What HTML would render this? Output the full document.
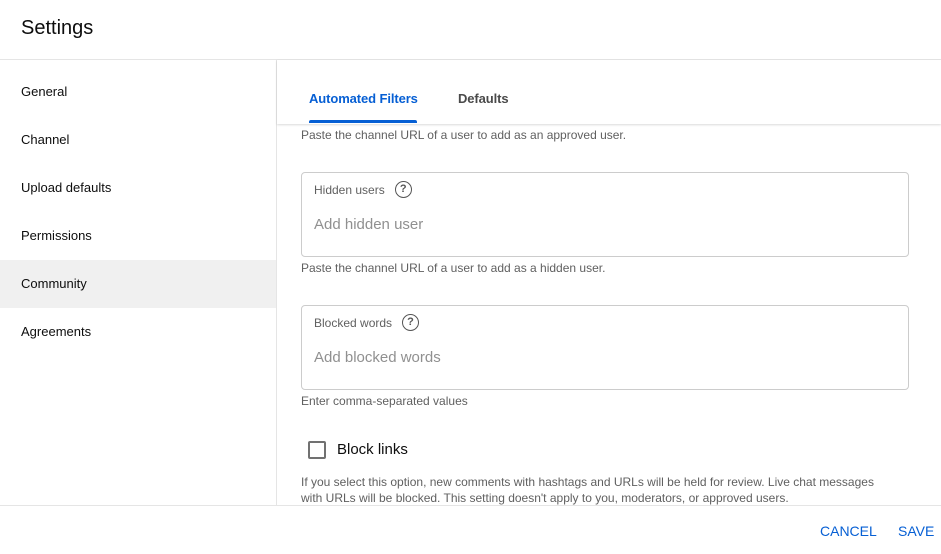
<!DOCTYPE html>
<html><head><style>
*{margin:0;padding:0;box-sizing:border-box}
body{width:941px;height:554px;overflow:hidden;background:#fff;font-family:"Liberation Sans",sans-serif;color:#0d0d0d;position:relative}
.abs{position:absolute}
.hdr{left:0;top:0;width:941px;height:60px;border-bottom:1px solid #e5e5e5}
.hdr span{position:absolute;left:21px;top:17px;font-size:20px;color:#0d0d0d}
.side{left:0;top:60px;width:277px;height:445px;border-right:1px solid #e5e5e5}
.item{position:absolute;left:0;width:276px;height:48px;font-size:13px;padding:24px 0 0 21px;line-height:0;color:#0d0d0d}
.tabs{left:277px;top:60px;width:664px;height:64px;box-shadow:0 1px 2px rgba(0,0,0,.15);background:#fff}
.tab{position:absolute;top:32px;font-size:13px;font-weight:bold;line-height:14px;letter-spacing:-.1px}
.small{font-size:12px;color:#606060;letter-spacing:0;white-space:nowrap}
.box{position:absolute;left:301px;width:608px;height:85px;border:1px solid #ccc;border-radius:4px}
.box .lab{position:absolute;left:12px;top:8px;font-size:12px;color:#606060;display:flex;align-items:center}
.box .ph{position:absolute;left:12px;top:43px;font-size:15px;color:#909090}
.q{display:inline-block;width:17px;height:17px;border:1.6px solid #555;border-radius:50%;font-size:11px;font-weight:bold;text-align:center;line-height:14px;color:#555;margin-left:10px}
.btn{position:absolute;top:523px;font-size:14px;color:#065fd4;font-weight:500}
</style></head><body>
<div class="abs hdr"><span>Settings</span></div>
<div class="abs side">
<div class="item" style="top:8px">General</div>
<div class="item" style="top:56px">Channel</div>
<div class="item" style="top:104px">Upload defaults</div>
<div class="item" style="top:152px">Permissions</div>
<div class="item" style="top:200px;background:#f0f0f0">Community</div>
<div class="item" style="top:248px">Agreements</div>
</div>
<div class="abs tabs">
<div class="tab" style="left:32px;color:#065fd4">Automated Filters</div>
<div class="abs" style="left:32px;top:60px;width:108px;height:3px;background:#065fd4;border-radius:2px 2px 0 0"></div>
<div class="tab" style="left:181px;color:#4a4a4a">Defaults</div>
</div>
<div class="abs small" style="left:301px;top:128px">Paste the channel URL of a user to add as an approved user.</div>
<div class="box" style="top:172px"><div class="lab">Hidden users<span class="q">?</span></div><div class="ph">Add hidden user</div></div>
<div class="abs small" style="left:301px;top:261px">Paste the channel URL of a user to add as a hidden user.</div>
<div class="box" style="top:305px"><div class="lab">Blocked words<span class="q">?</span></div><div class="ph">Add blocked words</div></div>
<div class="abs small" style="left:301px;top:394px">Enter comma-separated values</div>
<div class="abs" style="left:308px;top:441px;width:18px;height:18px;border:2px solid #717171;border-radius:2px"></div>
<div class="abs" style="left:337px;top:441px;font-size:15px;color:#0d0d0d">Block links</div>
<div class="abs small" style="left:301px;top:474px;line-height:16px">If you select this option, new comments with hashtags and URLs will be held for review. Live chat messages<br>with URLs will be blocked. This setting doesn't apply to you, moderators, or approved users.</div>
<div class="abs" style="left:0;top:505px;width:941px;height:49px;border-top:1px solid #e5e5e5;background:#fff"></div>
<div class="btn" style="left:820px">CANCEL</div>
<div class="btn" style="left:898px">SAVE</div>
</body></html>
